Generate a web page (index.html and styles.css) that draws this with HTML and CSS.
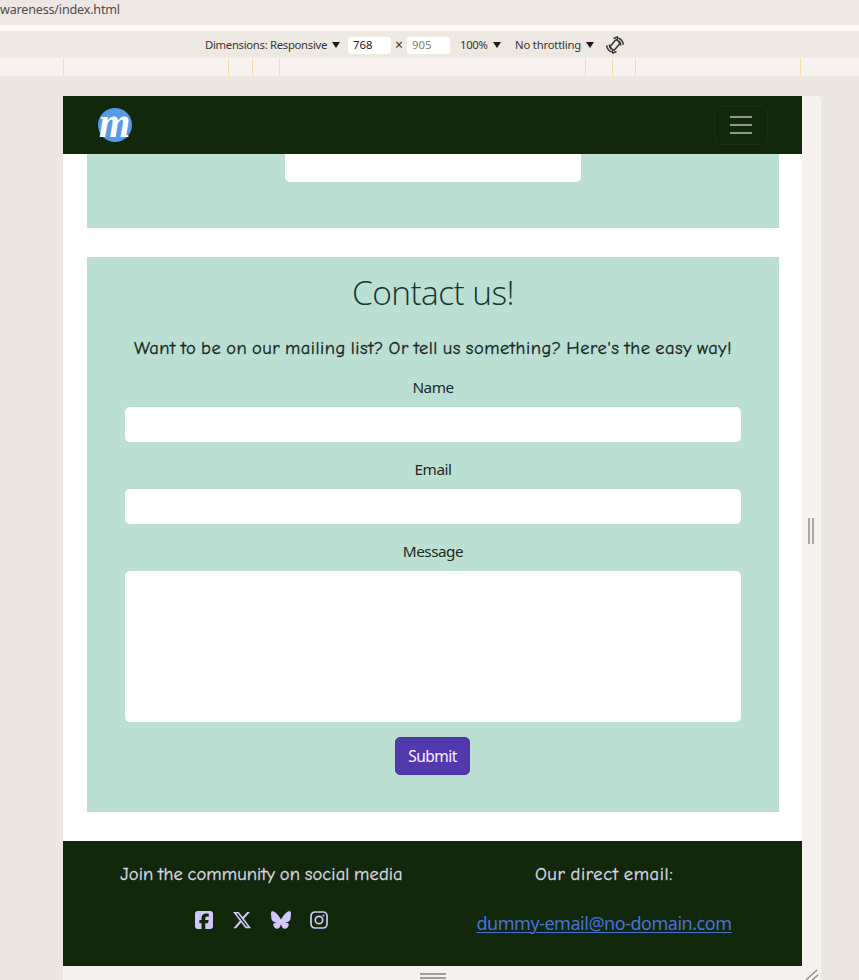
FILE: index.html
```html
<!DOCTYPE html>
<html lang="en">
<head>
<meta charset="utf-8">
<title>Contact us</title>
<link rel="stylesheet" href="styles.css">
</head>
<body>
<div class="address"><span>wareness/index.html</span></div>
<div class="toolbar">
  <span class="dimensions">Dimensions: Responsive</span><i class="caret"></i>
  <span class="size">768</span><span class="times">×</span><span class="size muted">905</span>
  <span class="percent">100%</span><i class="caret"></i>
  <span class="throttle">No throttling</span><i class="caret"></i>
  <svg class="rotate" viewBox="0 0 18 18" fill="none" stroke="#393632" stroke-width="1.5"><rect x="6.200" y="4" width="5.600" height="10" rx="1.800" transform="rotate(40 9 9)"/><path d="M7.500 2.500 11.300 1c1.200 1.200.7 2-1 3.200M13 2.200c2.500 1.200 4 3.500 4.300 6.500M10.500 15.500 6.700 17c-1.200-1.200-.7-2 1-3.200M5 15.800C2.500 14.600 1 12.300.7 9.300M3.300 8.500c0 2 .5 3.300 2 4.600M14.700 9.500c0-2-.5-3.300-2-4.600"/></svg>
</div>
<div class="ruler"><i></i><i></i><i></i><i></i><i></i><i></i><i></i><i></i></div>
<main class="stage">
  <div class="device">
    <header class="navbar">
      <div class="logo"><span>m</span></div>
      <button class="menu" aria-label="Menu"><i></i><i></i><i></i></button>
    </header>
    <section class="panel previous"><div class="stub"></div></section>
    <section class="panel contact">
      <h2><span>Contact us!</span></h2>
      <p class="comic lead"><span>Want to be on our mailing list? Or tell us something? Here's the easy way!</span></p>
      <label>Name</label><div class="field"></div>
      <label>Email</label><div class="field"></div>
      <label>Message</label><div class="field area"></div>
      <button class="submit">Submit</button>
    </section>
    <footer class="footer">
      <div class="social">
        <p class="comic join"><span>Join the community on social media</span></p>
        <div class="icons">
          <svg width="18" height="20" viewBox="0 32 448 448"><path d="M64 32C28.700 32 0 60.700 0 96v320c0 35.300 28.700 64 64 64h98.200V334.200h-52.800V256h52.800v-33.700c0-87.100 39.400-127.500 125-127.500 16.200 0 44.200 3.200 55.700 6.400V172c-6-.6-16.500-1-29.600-1-42 0-58.200 15.900-58.200 57.200V256h83.600l-14.400 78.200h-69.200V480H384c35.300 0 64-28.700 64-64V96c0-35.300-28.700-64-64-64z"/></svg>
          <svg width="20" height="20" viewBox="0 0 512 512"><path d="M389.200 48h70.600L305.600 224.200 487 464H345L233.700 318.600 106.500 464H35.800l164.900-188.500L26.800 48h145.600l100.500 132.900zm-24.800 373.800h39.100L151.100 88h-42z"/></svg>
          <svg width="20" height="20" viewBox="0 0 512 470"><path d="M111.800 42.200C170.200 86 233 174.900 256 222.600c23-47.700 85.800-136.600 144.200-180.400C442.300 10.600 512-13.900 512 64c0 15.600-8.900 130.700-14.100 149.400-18.200 64.900-84.400 81.400-143.300 71.400 103 17.500 129.200 75.500 72.600 133.600-107.400 110.200-154.400-27.600-166.400-62.900-3.300-9.900-4.800-9.900-9.600 0-12 35.300-59 173.100-166.400 62.900-56.600-58.100-30.400-116.100 72.600-133.600-58.900 10-125.100-6.500-143.300-71.400C8.900 194.700 0 79.600 0 64c0-77.900 69.700-53.400 111.800-21.800z"/></svg>
          <svg width="18" height="18" viewBox="0 0 18 18"><rect x="1" y="1" width="16" height="16" rx="4" fill="none" stroke="#d0c8fa" stroke-width="1.700"/><circle cx="9" cy="9" r="3.700" fill="none" stroke="#d0c8fa" stroke-width="1.700"/><circle cx="13.500" cy="4.500" r="1.100"/></svg>
        </div>
      </div>
      <div class="email">
        <p class="comic direct"><span>Our direct email:</span></p>
        <a href="#">dummy-email@no-domain.com</a>
      </div>
    </footer>
  </div>
  <div class="rail"><div class="grip"></div></div>
  <div class="bottom"><div class="bar"></div></div>
  <svg class="corner" width="18" height="14" viewBox="0 0 18 14" stroke="#8b8784" stroke-width="1.300"><path d="M3 14 14 4M9 14l6-5"/></svg>
</main>
</body>
</html>
```
FILE: styles.css
```css
* { box-sizing: border-box; }
body { margin: 0; width: 859px; height: 980px; overflow: hidden; font-family: "Noto Sans", "Open Sans", sans-serif; background: #ece6e0; color: #202925; }
p, h2 { margin: 0; }
.address { height: 25px; background: #eee6e3; color: #514b48; font-size: 12.6px; line-height: 19px; letter-spacing: -.2px; }
.toolbar { height: 32px; border-top: 6px solid #fffcf8; background: #ede8e1; padding: 2px 0 0 205px; display: flex; align-items: center; font-size: 11.3px; color: #393632; white-space: nowrap; }
.toolbar span { line-height: 16px; }
.dimensions { width: 127px; letter-spacing: -.3px; }
.caret { width: 8px; height: 6px; background: #1d1b19; clip-path: polygon(0 0, 100% 0, 50% 100%); }
.percent { width: 33px; margin-left: 10px; letter-spacing: -.3px; }
.throttle { width: 71px; margin-left: 14px; letter-spacing: -.2px; }
.toolbar .size { width: 43px; height: 17px; background: #fff; border-radius: 3px; padding-left: 5px; color: #24211f; }
.dimensions + .caret { margin-right: 8px; }
.toolbar .muted { color: #85807d; }
.times { width: 16px; text-align: center; font-size: 14px; }
.percent, .throttle { flex: none; }
.rotate { width: 18px; height: 18px; margin-left: 12px; }
.ruler { height: 19px; background: #f7f2ef; display: grid; grid-template-columns: 64px 165px 24px 27px 306px 27px 23px 165px; border-top: 1px solid #f6eadb; }
.ruler i { border-right: 1px solid #f8dcae; }
.stage { position: relative; height: 904px; padding: 20px 0 0 63px; display: grid; grid-template-columns: 739px 19px; grid-template-rows: 870px 14px; background: #ece6e0; }
.device { background: #fff; }
.navbar { height: 58px; background: #11280a; display: flex; align-items: center; justify-content: space-between; padding: 0 34px 0 35px; }
.logo { width: 34px; height: 34px; border-radius: 50%; background: #559be9; color: #fff; display: flex; justify-content: center; }
.logo span { font: italic 700 38px/34px "Liberation Serif", serif; height: 34px; margin-top: -3px; transform: scale(1.06, 1.16); }
.menu { width: 54px; height: 39px; margin: 0; border: 1px solid #1a3014; border-radius: 6px; background: none; padding: 0; display: flex; flex-direction: column; align-items: center; justify-content: center; gap: 6px; }
.menu i { width: 22px; height: 2px; background: #8d9a85; }
.panel { margin: 0 23px 0 24px; background: #bbdfd3; }
.previous { height: 74px; margin-bottom: 29px; }
.stub { width: 296px; height: 28px; margin: auto; background: #fff; border-radius: 0 0 5px 5px; }
.contact { height: 555px; padding: 13px 38px 0; text-align: center; }
.contact h2 { font: 300 33.5px/44px "Open Sans", sans-serif; letter-spacing: -.6px; color: #18342c; }
.comic { font-family: "Comic Sans MS", "Comic Neue", "Noto Sans", sans-serif; white-space: nowrap; font-size: 18.5px; line-height: 26px; height: 26px; -webkit-text-stroke: .3px; }
.lead { margin-top: 21px; color: #15251f; display: flex; justify-content: center; letter-spacing: .5px; word-spacing: -1.8px; }
.join { letter-spacing: .1px; word-spacing: -1.6px; }
.direct { letter-spacing: .6px; word-spacing: -1.6px; }
.contact label { display: block; height: 22px; margin-top: 16px; font-size: 15.3px; line-height: 23px; letter-spacing: -.5px; }
.lead + label { margin-top: 15px; }
.field { height: 35px; margin-top: 9px; margin-bottom: 16px; border-radius: 5px; background: #fff; }
.area { height: 151px; margin-bottom: 15px; }
.submit { width: 75px; height: 38px; padding: 0; border: 1px solid #4636a2; border-radius: 5px; background: #523aae; color: #f7f3ff; font: 15.500px "Noto Sans", sans-serif; letter-spacing: -.5px; display: block; margin: 0 0 0 270px; }
.footer { height: 125px; margin-top: 29px; background: #11280a; display: grid; grid-template-columns: 397px 288px; color: #d9d8e8; text-align: center; padding-top: 20px; }
.icons { display: flex; align-items: center; height: 24px; margin-top: 21px; padding-left: 132px; gap: 19px; fill: #d0c8fa; }
.email a { display: block; color: #4b70dc; font-size: 18px; line-height: 26px; margin-top: 23px; letter-spacing: -.48px; text-decoration-thickness: 1px; text-underline-offset: 2px; white-space: nowrap; }
.rail { background: #f5f1ef; display: flex; align-items: center; justify-content: center; border-top-right-radius: 4px; padding-right: 1px; }
.grip { width: 6px; height: 26px; border-left: 2px solid #aaa6a5; border-right: 2px solid #aaa6a5; }
.bottom { grid-column: 1 / 3; background: #f5f1ef; display: flex; justify-content: center; padding: 7px 19px 0 0; }
.bar { width: 26px; height: 6px; border-top: 2px solid #a29e9b; border-bottom: 2px solid #a29e9b; }
.corner { position: absolute; left: 803px; top: 890px; fill: none; }
```
